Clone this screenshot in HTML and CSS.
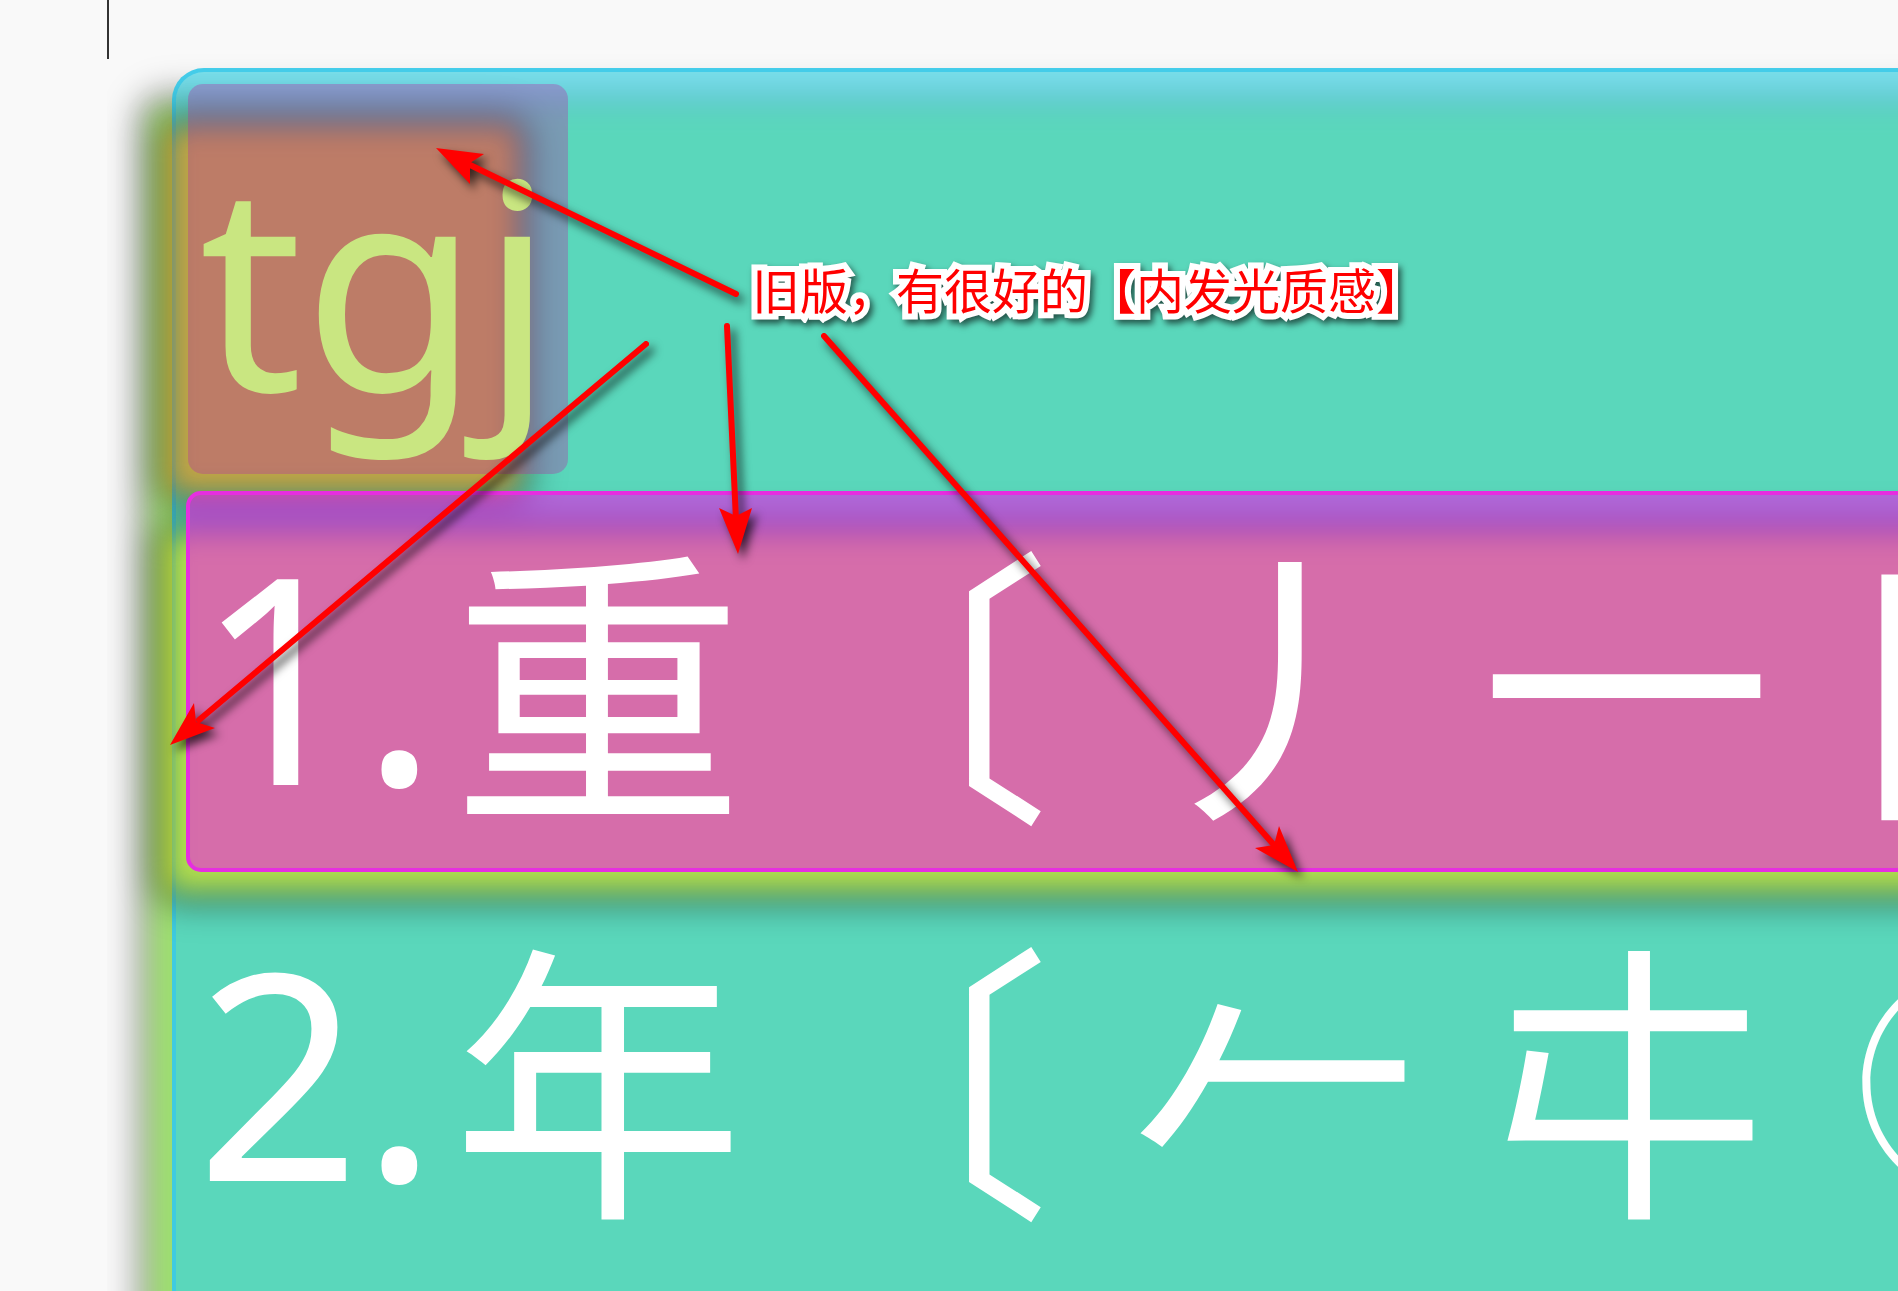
FILE: index.html
```html
<!DOCTYPE html>
<html lang="zh-CN">
<head>
<meta charset="utf-8">
<title>候选窗口</title>
<link rel="stylesheet" href="styles.css">
</head>
<body>
<main class="stage">
  <div class="caret"></div>
  <section class="panel glow">
    <div class="code glow">tgj</div>
    <ol class="list">
      <li class="row selected glow">
        <span class="index">1.</span><span class="word">重</span><span class="bracket">〔</span><span class="part">丿</span><span class="part">一</span><span class="part">日</span>
      </li>
      <li class="row">
        <span class="index">2.</span><span class="word">年</span><span class="bracket">〔</span><span class="part">𠂉</span><span class="part">㐄</span><span class="part mark">①</span>
      </li>
    </ol>
  </section>
</main>
<svg class="arrows" width="1400" height="900" viewBox="0 0 1400 900" aria-hidden="true">
  <g class="arrow"><path class="shaft" d="M736 294 466 163"/><path class="head" d="M436 148 484 154 470 163 470 184Z"/></g>
  <g class="arrow"><path class="shaft" d="M646 344 199 720"/><path class="head" d="M170 745 194 703 196 722 215 728Z"/></g>
  <g class="arrow"><path class="shaft" d="M727 326 736 520"/><path class="head" d="M738 554 719 508 736 516 752 508Z"/></g>
  <g class="arrow"><path class="shaft" d="M824 336 1274 845"/><path class="head" d="M1298 872 1279 826 1274 845 1255 848Z"/></g>
</svg>
<p class="note">旧版，有很好的【内发光质感】</p>
</body>
</html>
```
FILE: styles.css
```css
* {
  box-sizing: border-box;
}

body {
  margin: 0;
  background: #f9f9f9;
  overflow: hidden;
}

.stage {
  display: flex;
  flex-direction: column;
  gap: 9px;
  height: 100vh;
  margin-left: 107px;
  overflow: hidden;
}

.caret {
  flex: none;
  width: 2px;
  height: 59px;
  background: #333;
}

/* Translucent box over its own blurred, down-left glow */
.glow {
  position: relative;
  isolation: isolate;
}

.glow::before,
.glow::after {
  content: "";
  position: absolute;
  border-radius: 15px;
}

.glow::before {
  z-index: -2;
  inset: 42px 50px -20px -20px;
  background: var(--glow);
  box-shadow: 0 0 20px 12px rgba(0, 0, 0, 0.5), inset 0 0 16px rgba(0, 0, 0, 0.2);
  filter: blur(13px);
}

.glow::after {
  z-index: -1;
  inset: 0;
  background: var(--fill);
  border: 4px solid var(--edge);
}

.panel {
  --glow: #9cdf6e;
  --fill: rgba(55, 211, 229, 0.65);
  --edge: rgba(55, 200, 232, 0.8);
  flex: 1;
  margin: 0 -80px -80px 65px;
  padding: 16px 0 0 14px;
  color: #fff;
  font-family: "Noto Sans", "Noto Sans CJK SC", sans-serif;
  font-size: 292px;
}

.panel::before {
  inset: 38px 40px -30px -22px;
  box-shadow: 0 0 20px 14px rgba(0, 0, 0, 0.4);
}

.panel::after {
  border-radius: 32px;
}

.code {
  --glow: rgba(230, 150, 31, 0.75);
  --fill: rgba(180, 46, 167, 0.35);
  --edge: transparent;
  width: 380px;
  margin-left: 2px;
  padding-left: 11px;
  color: #c9e681;
  font-size: 288px;
  line-height: 390px;
  white-space: nowrap;
}

.list {
  display: grid;
  gap: 15px;
  margin: 17px 0 0;
  padding: 0;
  list-style: none;
}

.row {
  display: grid;
  grid-template-columns: 256px 312px 366px repeat(3, 350px);
  padding: 0 0 17px 10px;
  line-height: 364px;
  white-space: nowrap;
}

.selected {
  --glow: rgba(208, 225, 42, 0.75);
  --fill: rgba(240, 26, 238, 0.58);
  --edge: #e62ee0;
}

.index {
  font-size: 288px;
}

.word,
.bracket,
.part {
  font-family: "Noto Sans CJK SC", sans-serif;
}

.bracket {
  font-size: 288px;
}

.mark {
  padding-left: 24px;
  font-size: 248px;
}

.arrows {
  position: absolute;
  top: 0;
  left: 0;
}

.arrow {
  filter: drop-shadow(5px 6px 5px rgba(0, 0, 0, 0.7));
}

.shaft {
  fill: none;
  stroke: #f00;
  stroke-width: 6px;
  stroke-linecap: round;
}

.head {
  fill: #f00;
}

.note {
  position: absolute;
  top: 254px;
  left: 752px;
  margin: 0;
  color: #f00;
  font: 48px/68px "Noto Sans CJK SC", sans-serif;
  white-space: nowrap;
  -webkit-text-stroke: 12px #fff;
  paint-order: stroke fill;
  stroke-linejoin: round;
  filter: drop-shadow(3px 4px 3px rgba(0, 0, 0, 0.6));
}
```
